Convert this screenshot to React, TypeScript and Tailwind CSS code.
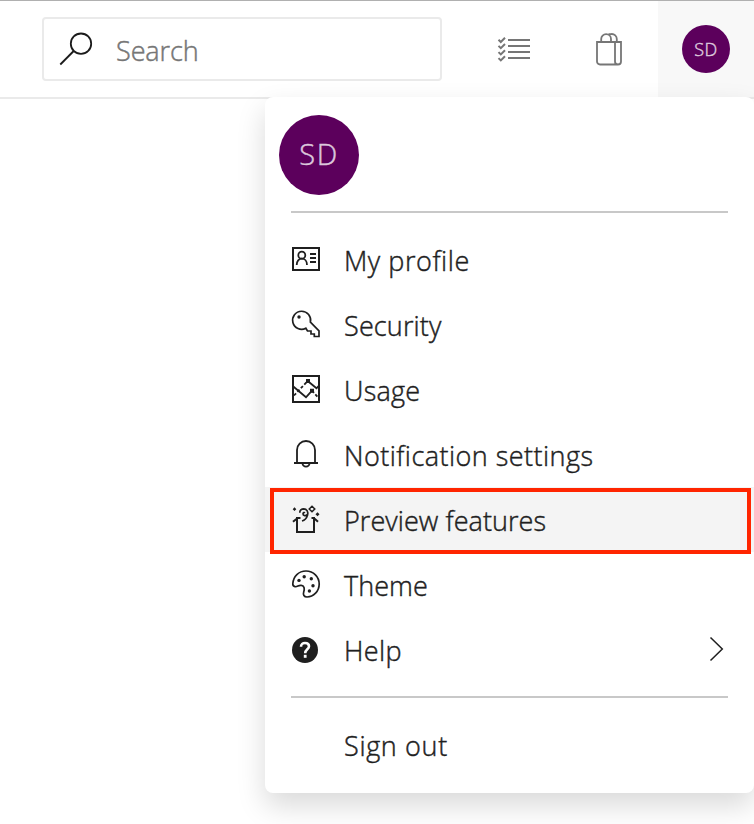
import type { ReactNode } from "react";

const Glyph = ({ children }: { children: ReactNode }) => (
  <svg
    viewBox="0 0 32 32"
    className="mt-4 h-8 w-8 shrink-0 self-start"
    fill="none"
    stroke="currentColor"
    strokeWidth="2"
  >
    {children}
  </svg>
);

const ProfileIcon = () => (
  <Glyph>
    <rect x="3" y="5" width="26" height="22" />
    <circle cx="11.8" cy="12.2" r="3.5" strokeWidth="1.8" />
    <path d="M6.7 22c0-4 2.2-6.3 5.1-6.3S17 18 17 22M20 11h6M20 15h6M20 19h6" strokeWidth="1.8" />
  </Glyph>
);

const KeyIcon = () => (
  <Glyph>
    <path d="M20.4 14.2L29 22.8V28.5H24.3V26H21V23H17.5L15.8 20.2A9 9 0 1 1 20.4 14.2Z" strokeWidth="1.7" />
    <circle cx="9" cy="9" r="1.7" fill="currentColor" stroke="none" />
  </Glyph>
);

const UsageIcon = () => (
  <Glyph>
    <rect x="3" y="3" width="26" height="26" />
    <path d="M3 13.3L16 24.3L22 17.7M17.7 8L26.5 15.3L29 12.7" strokeWidth="1.8" />
    <path d="M4 22.5L17.7 8M22 17.7L29 25.5" strokeDasharray="3 2" strokeWidth="1.8" />
    <path d="M16 6h4v4h-4zM20 15.7h4v4h-4z" fill="currentColor" stroke="none" />
  </Glyph>
);

const BellIcon = () => (
  <Glyph>
    <path d="M4 25H28M7 25V12a9 9 0 0 1 18 0V25M12.5 25.3a3.5 3.3 0 0 0 7 0" strokeWidth="1.8" />
  </Glyph>
);

const PreviewIcon = () => (
  <Glyph>
    <path d="M10.5 15H7V29H24V15H21.5M8 14.800L3 18.800M23.500 14.800L28 18.800" />
    <path d="M9.800 9.800C9.600 7.500 11.500 5.900 13.800 5.900C17 6 18.500 9 17.500 12.200C16.600 15.200 14.800 17.200 12 18M17.300 11.600C15.800 13.400 12.900 12.900 13 10.800C13.100 9.600 14.200 9.200 15 9.800" strokeWidth="1.700" />
    <path d="M22 3.200L24.800 6L22 8.800L19.200 6Z" strokeWidth="1.500" />
    <path
      d="M4.500 4.300L6.300 6.200L4.500 8.100L2.700 6.200ZM27.500 9.300L29.500 11.300L27.500 13.300L25.500 11.300Z"
      fill="currentColor"
      stroke="none"
    />
  </Glyph>
);

const ThemeIcon = () => (
  <Glyph>
    <path d="M2.8 15.8C3.2 8.2 8.8 3 16 3C23.5 3 29.2 8.8 29.2 16C29.2 23.2 23.6 29 17 29C14 29 12.8 26.8 13.7 24C14.7 21 14.5 18 11.5 17.4C8.5 16.7 7.5 19.2 5 18.7C3.5 18.4 2.7 17.3 2.8 15.8Z" strokeWidth="1.7" />
    <g fill="currentColor" stroke="none">
      <circle cx="14.2" cy="8.8" r="1.7" />
      <circle cx="21.3" cy="10.7" r="1.7" />
      <circle cx="9" cy="12.4" r="1.7" />
      <circle cx="23" cy="17.7" r="1.7" />
      <circle cx="19.4" cy="23" r="1.7" />
    </g>
  </Glyph>
);

const HelpIcon = () => (
  <Glyph>
    <circle cx="15" cy="17" r="13" fill="currentColor" stroke="none" />
    <path d="M11 13.7C11 11.2 12.8 10 15 10C17.4 10 19 11.2 19 13.3C19 16.4 15.2 16.2 15.2 20.3" stroke="#fff" strokeWidth="2.6" />
    <path d="M13.8 21.8h2.8v3h-2.8z" fill="#fff" stroke="none" />
  </Glyph>
);

const items = [
  { label: "My profile", icon: <ProfileIcon />, cls: "tracking-[0.55px]" },
  { label: "Security", icon: <KeyIcon />, cls: "tracking-[0.15px]" },
  { label: "Usage", icon: <UsageIcon />, cls: "tracking-[0.25px]" },
  { label: "Notification settings", icon: <BellIcon />, cls: "tracking-[0.46px]" },
  { label: "Preview features", icon: <PreviewIcon />, cls: "tracking-[0.06px]" },
  { label: "Theme", icon: <ThemeIcon />, cls: "tracking-[0.05px]" },
  { label: "Help", icon: <HelpIcon />, cls: "tracking-[0.4px]" },
];

function Header() {
  return (
    <header className="flex h-[99px] border-t border-b-2 border-t-[#b0b0b0] border-b-[#eaeaea]">
      <div className="mt-4 ml-[42px] flex h-16 w-[400px] items-center rounded-[4px] border-2 border-[#eaeaea]">
        <svg viewBox="0 0 36 36" className="ml-[14px] h-9 w-9" fill="none" stroke="#1b1b1b" strokeWidth="1.8">
          <circle cx="23" cy="12.7" r="10.2" />
          <path d="M15.7 20L2.3 33.5" />
        </svg>
        <span className="mt-1 ml-[22px] text-[27px] leading-9 tracking-[-0.1px] text-[#767676]">Search</span>
      </div>
      <svg viewBox="0 0 34 26" className="mt-[36px] ml-[55px] h-[26px] w-[34px]" fill="none" stroke="#767676" strokeWidth="2">
        <path d="M11 3h22M11 9h22M11 15h22M11 21h22" />
        <path d="M1.5 2.7l2.3 2.3 4.2-4.2M1.5 8.9l2.3 2.3 4.2-4.2M1.5 15.1l2.3 2.3 4.2-4.2M1.5 21.1l2.3 2.3 4.2-4.2" />
      </svg>
      <svg viewBox="0 0 28 34" className="mt-8 ml-[64px] h-[34px] w-7" fill="none" stroke="#767676" strokeWidth="1.8">
        <path d="M2 9H26V28.5a3 3 0 0 1-3 3H5a3 3 0 0 1-3-3ZM20 9V28.5a3 3 0 0 0 3 3M6.2 9V6a4.900 4.900 0 0 1 9.800 0V9M12.800 2C14 1 15.500 1 16.500 1A5 5 0 0 1 21.800 6V9" />
      </svg>
      <div className="ml-auto flex h-24 w-24 items-center justify-center bg-[#f8f8f8]">
        <div className="flex h-12 w-12 items-center justify-center rounded-full bg-[#5c005c] text-[18px] tracking-[0.5px] text-[#dcc8dc]">SD</div>
      </div>
    </header>
  );
}

export default function App() {
  return (
    <div className="relative h-[824px] w-[754px] overflow-hidden bg-white font-['Open_Sans','Noto_Sans',sans-serif] font-light text-[#1f1f1f] [-webkit-text-stroke:0.45px_currentColor]">
      <Header />
      <div className="absolute top-[97px] left-[265px] flex h-[696px] w-[489px] flex-col rounded-lg bg-white pt-[18px] shadow-[0_13px_29px_rgba(0,0,0,0.15)]">
        <div className="ml-[14px] flex h-20 w-20 items-center justify-center rounded-full bg-[#5c005c] pb-[2px] text-[29px] tracking-[1.5px] text-[#dcc8dc]">SD</div>
        <div className="mt-4 mr-[26px] mb-[14px] ml-[26px] h-[2px] shrink-0 bg-[#c8c8c8]" />
        {items.map((item) => (
          <div
            key={item.label}
            className={`flex h-[65px] shrink-0 items-center pr-[29px] pl-[25px] ${item.label === "Preview features" ? "bg-[#f4f4f4]" : ""}`}
          >
            {item.icon}
            <span className={`mt-[2px] ml-[22px] text-[27px] leading-9 whitespace-nowrap ${item.cls}`}>{item.label}</span>
            {item.label === "Help" && (
              <svg viewBox="0 0 16 26" className="mb-[2px] ml-auto h-[26px] w-4" fill="none" stroke="#1f1f1f" strokeWidth="1.5">
                <path d="M1.500 1.500L13.300 13L1.500 24.500" />
              </svg>
            )}
          </div>
        ))}
        <div className="mt-[14px] mr-[26px] mb-[15px] ml-[26px] h-[2px] shrink-0 bg-[#c8c8c8]" />
        <div className="flex h-[65px] shrink-0 items-center pl-[79px] text-[27px] leading-9 tracking-[0.65px]">Sign out</div>
      </div>
      <div className="absolute top-[488px] left-[270px] h-[66px] w-[481px] border-4 border-[#ff2500]" />
    </div>
  );
}
